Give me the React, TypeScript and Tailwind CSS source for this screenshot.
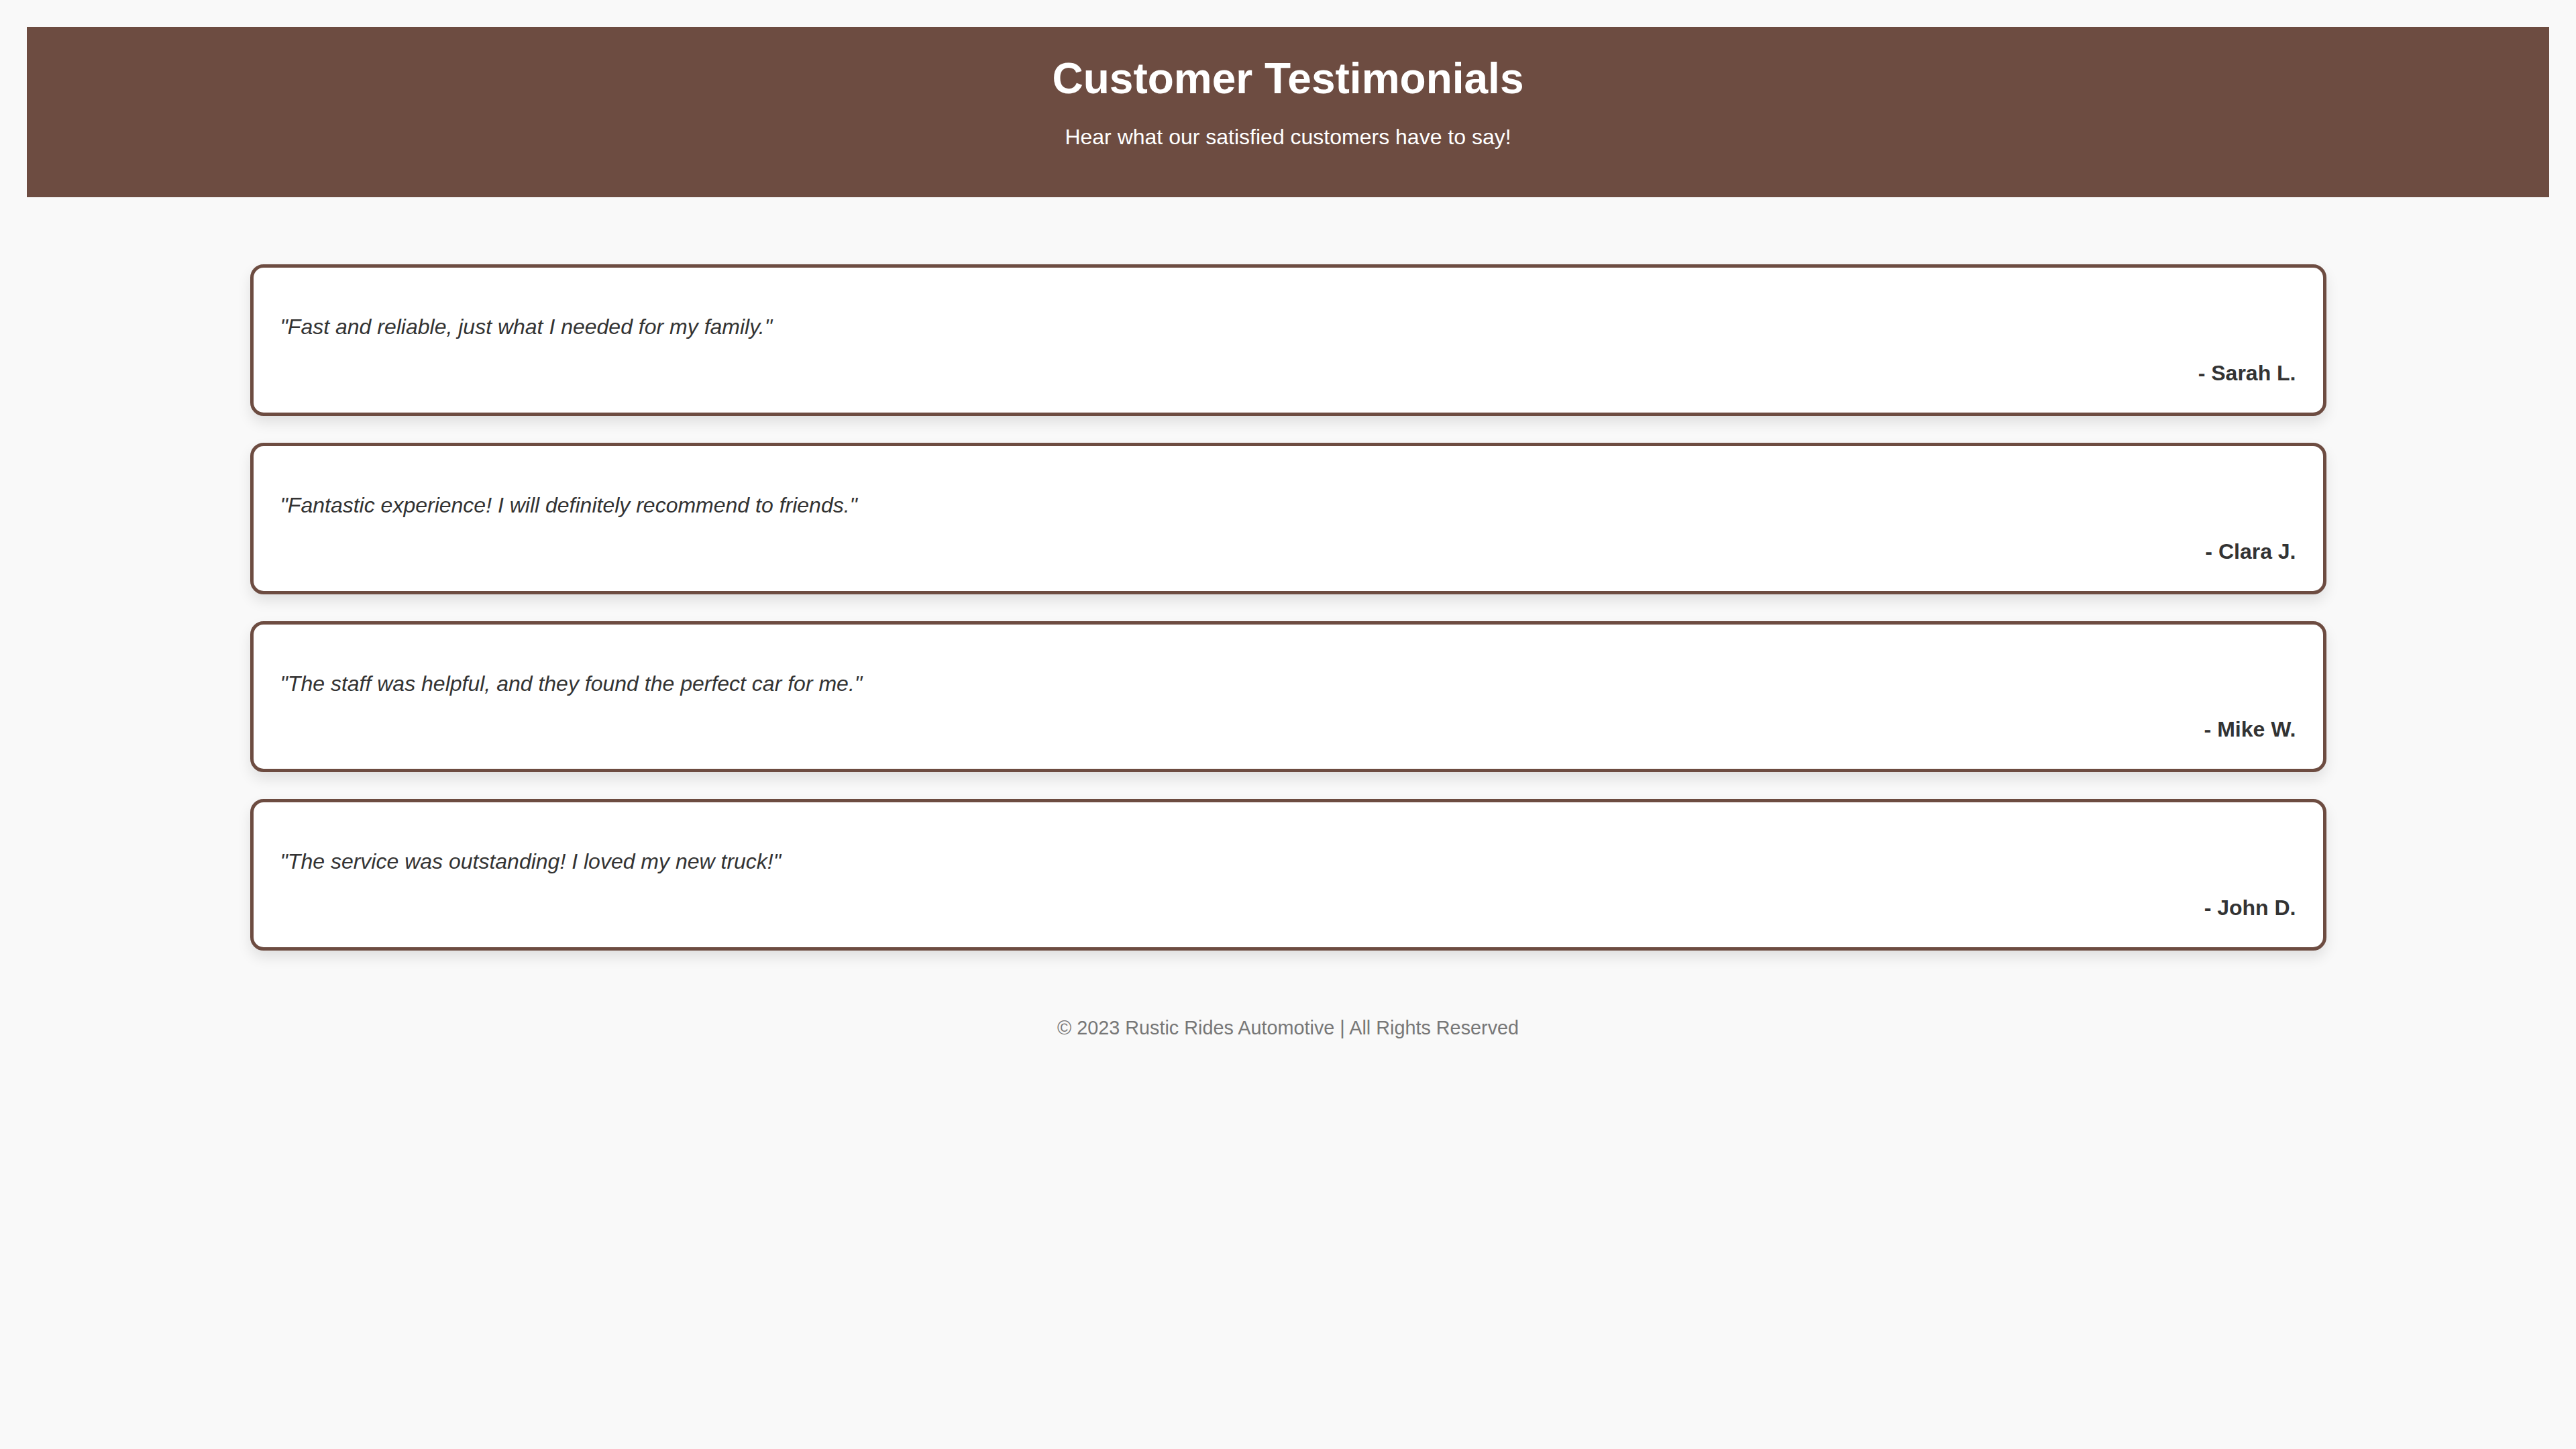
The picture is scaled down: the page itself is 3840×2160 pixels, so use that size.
const testimonials = [
  { quote: '"Fast and reliable, just what I needed for my family."', author: '- Sarah L.' },
  { quote: '"Fantastic experience! I will definitely recommend to friends."', author: '- Clara J.' },
  { quote: '"The staff was helpful, and they found the perfect car for me."', author: '- Mike W.' },
  { quote: '"The service was outstanding! I loved my new truck!"', author: '- John D.' },
]

function TestimonialCard({ quote, author }: { quote: string; author: string }) {
  return (
    <div className="rounded-[20px] border-[5px] border-[#6d4c41] bg-white px-[40px] py-[40px] shadow-[0_10px_20px_rgba(0,0,0,0.1)]">
      <p className="mb-[32px] mt-[30px] text-[32px] italic leading-[1.15] text-[#333]">{quote}</p>
      <p className="text-right text-[32px] font-bold leading-[1.15] text-[#333]">{author}</p>
    </div>
  )
}

export default function App() {
  return (
    <div className="min-h-screen bg-[#f9f9f9] p-[40px] font-['Liberation_Sans',Arial,sans-serif]">
      <header className="bg-[#6d4c41] pb-[40px] pt-[41px] text-center text-white">
        <h1 className="mb-[31px] text-[64px] font-bold leading-[1.15]">Customer Testimonials</h1>
        <p className="mb-[32px] text-[32px] leading-[1.15]">Hear what our satisfied customers have to say!</p>
      </header>

      <main className="mx-auto mt-[100px] flex w-[3095px] flex-col gap-[40px]">
        {testimonials.map((t, i) => (
          <TestimonialCard key={i} quote={t.quote} author={t.author} />
        ))}
      </main>

      <footer className="mt-[99px] text-center text-[28.8px] leading-[1.15] text-[#777]">
        © 2023 Rustic Rides Automotive | All Rights Reserved
      </footer>
    </div>
  )
}
